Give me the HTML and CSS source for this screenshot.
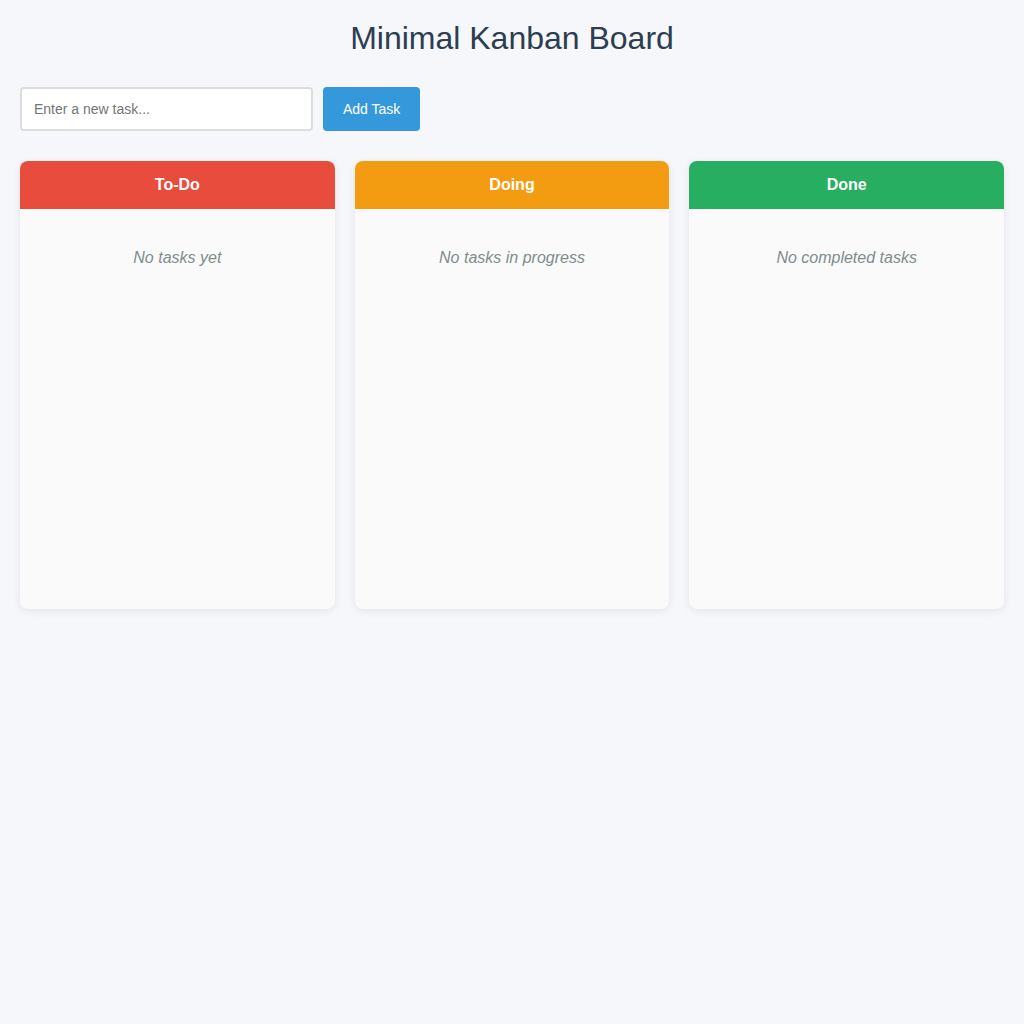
FILE: index.html
```html
<!DOCTYPE html>
<html lang="en">
<head>
<meta charset="utf-8">
<title>Minimal Kanban Board</title>
<link rel="stylesheet" href="styles.css">
</head>
<body>
<h1 class="title">Minimal Kanban Board</h1>
<div class="add-row">
  <input class="task-input" type="text" placeholder="Enter a new task...">
  <button class="add-btn">Add Task</button>
</div>
<div class="board">
  <div class="column">
    <div class="col-header todo">To-Do</div>
    <div class="col-body"><p class="empty">No tasks yet</p></div>
  </div>
  <div class="column">
    <div class="col-header doing">Doing</div>
    <div class="col-body"><p class="empty">No tasks in progress</p></div>
  </div>
  <div class="column">
    <div class="col-header done">Done</div>
    <div class="col-body"><p class="empty">No completed tasks</p></div>
  </div>
</div>
</body>
</html>
```
FILE: styles.css
```css
* { box-sizing: border-box; }
html, body { margin: 0; }
body {
  background: #f5f7fa;
  font-family: "Liberation Sans", Arial, sans-serif;
  padding: 20px;
  color: #2c3e50;
}
.title {
  margin: 0 0 30px;
  font-size: 32px;
  font-weight: normal;
  line-height: 37px;
  text-align: center;
  color: #2c3e50;
}
.add-row {
  display: flex;
  gap: 10px;
  margin-bottom: 30px;
}
.task-input {
  width: 293px;
  height: 44px;
  padding: 0 12px;
  border: 2px solid #dddddd;
  border-radius: 4px;
  font-family: inherit;
  font-size: 14px;
  background: #fff;
  color: #333;
}
.task-input::placeholder { color: #757575; }
.add-btn {
  height: 44px;
  padding: 0 20px;
  border: none;
  border-radius: 4px;
  background: #3498db;
  color: #fff;
  font-family: inherit;
  font-size: 14px;
}
.board {
  display: grid;
  grid-template-columns: repeat(3, 1fr);
  gap: 20px;
}
.column {
  background: #fafafa;
  border-radius: 8px;
  box-shadow: 0 2px 8px rgba(0, 0, 0, 0.08);
  overflow: hidden;
}
.col-header {
  height: 48px;
  display: flex;
  align-items: center;
  justify-content: center;
  color: #fff;
  font-weight: bold;
  font-size: 16px;
}
.todo { background: #e74c3c; }
.doing { background: #f39c12; }
.done { background: #27ae60; }
.col-body {
  min-height: 400px;
  padding: 20px;
}
.empty {
  margin: 0;
  padding: 20px 0;
  text-align: center;
  font-style: italic;
  font-size: 16px;
  color: #7f8c8d;
}
```
